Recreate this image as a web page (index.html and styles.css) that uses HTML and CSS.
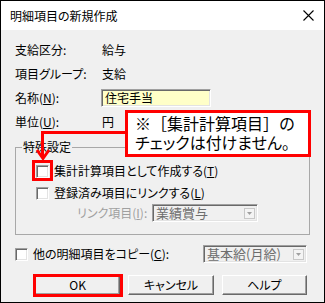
FILE: index.html
```html
<!DOCTYPE html>
<html lang="ja">
<head>
<meta charset="utf-8">
<title>明細項目の新規作成</title>
<link rel="stylesheet" href="styles.css">
</head>
<body>
<div class="dialog">
  <div class="titlebar">
    <span class="title">明細項目の新規作成</span>
    <svg class="close" width="11" height="11" viewBox="0 0 11 11"><path d="M0.5 0.5L10.5 10.5M10.5 0.5L0.5 10.5" stroke="#000" stroke-width="1.1" fill="none"/></svg>
  </div>
  <div class="content">
    <div class="row"><span class="label">支給区分:</span><span class="value">給与</span></div>
    <div class="row"><span class="label">項目グループ:</span><span class="value">支給</span></div>
    <div class="row"><span class="label">名称(<u>N</u>):</span><span class="input">住宅手当</span></div>
    <div class="row"><span class="label">単位(<u>U</u>):</span><span class="value">円</span></div>
    <fieldset class="group">
      <legend class="group-title">特殊設定</legend>
      <div class="group-inner">
        <div class="check-row"><span class="checkbox"></span><span>集計計算項目として作成する(<u>T</u>)</span></div>
        <div class="check-row"><span class="checkbox"></span><span>登録済み項目にリンクする(<u>L</u>)</span></div>
        <div class="link-row">
          <span class="link-label">リンク項目(<u>I</u>):</span>
          <span class="combo combo-link"><span class="combo-text">業績賞与</span><span class="combo-btn"><svg width="5" height="3" viewBox="0 0 5 3"><path d="M0 0H5L2.5 3Z" fill="#a0a0a0"/></svg></span></span>
        </div>
      </div>
    </fieldset>
    <div class="copy-row">
      <span class="checkbox"></span><span class="copy-label">他の明細項目をコピー(<u>C</u>):</span>
      <span class="combo combo-copy"><span class="combo-text">基本給(月給)</span><span class="combo-btn"><svg width="5" height="3" viewBox="0 0 5 3"><path d="M0 0H5L2.5 3Z" fill="#a0a0a0"/></svg></span></span>
    </div>
    <div class="buttons">
      <span class="btn">OK</span>
      <span class="btn">キャンセル</span>
      <span class="btn">ヘルプ</span>
    </div>
  </div>

  <div class="callout"><div class="line1">※［集計計算項目］の</div><div class="line2">チェックは付けません。</div></div>
  <svg class="connector" width="92" height="32" viewBox="0 0 92 32"><polyline points="91,2.5 7.5,2.5 7.5,27" fill="none" stroke="#ff0000" stroke-width="3"/><polyline points="2,20 8,28.5 14,20" fill="none" stroke="#ff0000" stroke-width="3"/></svg>
  <div class="mark mark-check"></div>
  <div class="mark mark-ok"></div>
</div>
</body>
</html>
```

FILE: styles.css
```css
* { box-sizing: border-box; }
html, body { margin: 0; padding: 0; }
body {
  width: 325px;
  height: 303px;
  overflow: hidden;
  background: #fff;
  font-family: "Noto Sans CJK JP", "Noto Sans", sans-serif;
  font-size: 12px;
  color: #000;
  font-feature-settings: "palt";
}
u { text-decoration: underline; text-underline-offset: 1px; }

.dialog {
  position: relative;
  width: 325px;
  height: 303px;
  border: 1px solid #000;
  background: #f0f0f0;
  display: flex;
  flex-direction: column;
  overflow: hidden;
}

.titlebar {
  flex: none;
  height: 29px;
  background: #fff;
  display: flex;
  align-items: center;
  justify-content: space-between;
  padding: 0 10px 0 9px;
}
.title { font-size: 12px; line-height: 14px; }
.close { display: block; }

.content {
  flex: 1;
  padding: 8px 17px 0 14px;
  display: flex;
  flex-direction: column;
}

.row { display: flex; align-items: center; height: 24px; line-height: 14px; }
.label { width: 86px; flex: none; }
.value { padding-left: 1px; }
.input {
  width: 110px;
  height: 18px;
  background: #ffffc8;
  border: 1px solid;
  border-color: #a0a0a0 #fff #fff #a0a0a0;
  box-shadow: inset 1px 1px 0 #696969, inset -1px -1px 0 #e3e3e3;
  padding-left: 3px;
  line-height: 16px;
}

.group {
  margin: 6px 0 0 0;
  width: 295px;
  border: 1px solid #a8a8a8;
  padding: 6px 0 12px 6px;
  min-width: 0;
}
.group-title { padding: 0 1px; line-height: 14px; }
.group-inner { padding-left: 14px; display: flex; flex-direction: column; }

.check-row { display: flex; align-items: center; height: 22px; gap: 5px; line-height: 14px; }
.checkbox {
  flex: none;
  width: 13px;
  height: 13px;
  background: #fff;
  border: 1px solid;
  border-color: #a0a0a0 #fff #fff #a0a0a0;
  box-shadow: inset 1px 1px 0 #696969, inset -1px -1px 0 #e3e3e3;
}

.link-row { display: flex; align-items: center; height: 18px; margin-left: 41px; line-height: 14px; }
.link-label { width: 75px; flex: none; color: #a0a0a0; }

.combo {
  display: flex;
  align-items: center;
  height: 18px;
  background: #f0f0f0;
  border: 1px solid;
  border-color: #a0a0a0 #fff #fff #a0a0a0;
  box-shadow: inset 1px 1px 0 #696969, inset -1px -1px 0 #e3e3e3;
  padding: 0 2px 0 3px;
  color: #6d6d6d;
  font-size: 13px;
  line-height: 14px;
}
.combo-text { flex: 1; white-space: nowrap; }
.combo-btn {
  flex: none;
  width: 11px;
  height: 11px;
  border: 1px solid #c8c8c8;
  background: #f4f4f4;
  display: flex;
  align-items: center;
  justify-content: center;
}
.combo-link { width: 106px; }
.combo-copy { width: 104px; margin-left: auto; }

.copy-row { display: flex; align-items: center; height: 20px; margin-top: 9px; line-height: 14px; }
.copy-label { margin-left: 5px; }

.buttons { display: flex; gap: 8px; margin-top: 11px; padding-left: 20px; }
.btn {
  width: 86px;
  height: 20px;
  display: flex;
  align-items: center;
  justify-content: center;
  background: #f0f0f0;
  border: 1px solid;
  border-color: #fff #696969 #696969 #fff;
  box-shadow: inset -1px -1px 0 #a0a0a0;
  line-height: 14px;
}

.callout {
  position: absolute;
  left: 124px;
  top: 109px;
  width: 186px;
  height: 47px;
  border: 3px solid #ff0000;
  background: #fff;
  padding: 1px 0 0 7px;
  font-size: 16px;
  line-height: 19px;
  font-feature-settings: normal;
  white-space: nowrap;
}
.line2 { font-feature-settings: "palt"; }

.connector { position: absolute; left: 34px; top: 129px; }

.mark { position: absolute; border: 3px solid #ff0000; }
.mark-check { left: 31px; top: 159px; width: 21px; height: 21px; }
.mark-ok { left: 32px; top: 273px; width: 90px; height: 23px; }
```
